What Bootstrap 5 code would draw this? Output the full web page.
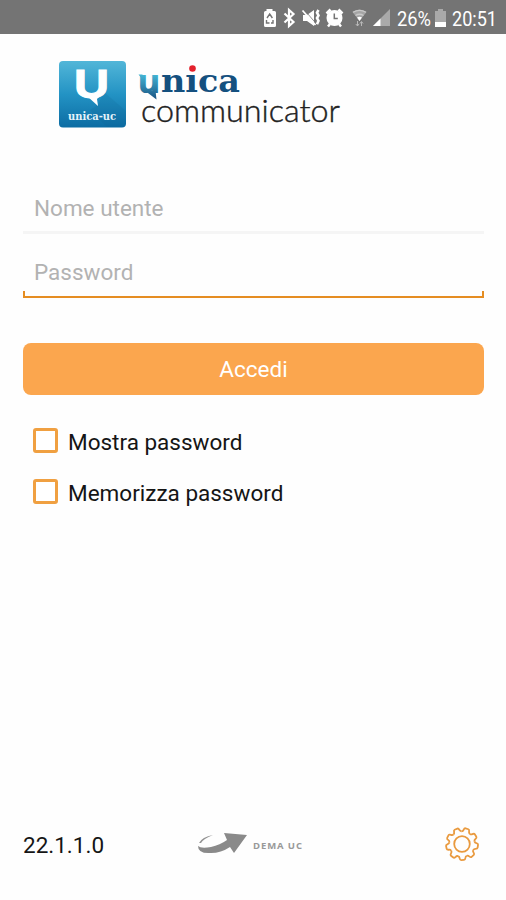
<!DOCTYPE html>
<html lang="it">
<head>
<meta charset="utf-8">
<meta name="viewport" content="width=device-width, initial-scale=1">
<title>Unica Communicator</title>
<link href="https://cdn.jsdelivr.net/npm/bootstrap@5.3.0/dist/css/bootstrap.min.css" rel="stylesheet">
<style>
  body { font-family: Roboto, "Liberation Sans", sans-serif; font-size: 22.5px; line-height: 30px; color: #151515; background: #fefefe; }
  .screen { height: 900px; }
  .statusbar { height: 34px; background: #747474; }
  .brand { padding: 22px 0 0 54px; height: 148px; }
  .login-form { margin: 0 22px 0 23px; }
  .entry { height: 49px; padding: 3px 11px 0; border: 0; border-radius: 0; background: transparent; font-size: 22.5px; line-height: 30px; }
  .entry:focus { box-shadow: none; background: transparent; }
  .entry::placeholder { color: #b2b2b2; opacity: 1; }
  .entry-line { height: 3px; background: #f5f5f5; margin-bottom: 12px; }
  .entry-line-active { height: 7px; border: 2px solid #e58d22; border-top: 0; margin-top: -4px; }
  .btn-login { height: 52px; padding: 8px 0 6px; background: #fba64e; color: #fff; border: 0; border-radius: 8px; font-size: 22.5px; margin-top: 45px; }
  .btn-login:hover { background: #f2993c; color: #fff; }
  .options { padding-top: 20px; }
  .option { height: 51px; padding-left: 10px; gap: 10px; }
  .option span { padding-top: 2px; }
  .form-check-input.tick { width: 25px; height: 25px; margin: 0; border: 3px solid #f0a041; border-radius: 3px; background-color: #fff; }
  .footer-row { height: 60px; padding: 0 26px 0 23px; margin-bottom: 26px; }
  .version { width: 173px; padding-top: 1px; font-size: 22.5px; }
</style>
</head>
<body>
<main class="screen d-flex flex-column overflow-hidden">
  <header class="statusbar flex-shrink-0">
    <svg class="d-block" width="506" height="34" viewBox="0 0 506 34" fill="#fff" font-family="Roboto, sans-serif" font-size="20">
      <!-- battery saver -->
      <path d="M266.500 9h6v2h2q1.500 0 1.500 1.500v13q0 1.500-1.500 1.500h-9q-1.500 0-1.500-1.500v-13q0-1.500 1.500-1.500h1z"/>
      <path d="M267 18l2.700-4 2.700 4M266.500 20v3h3M273 20v3h-2" fill="none" stroke="#747474" stroke-width="1.400"/>
      <!-- bluetooth -->
      <path d="M284.500 13.500l9 8.500-4.500 4V10l4.500 4-9 8.500" fill="none" stroke="#fff" stroke-width="2.200"/>
      <!-- muted, vibrating -->
      <path d="M303 15h4l7-5v16l-7-5h-4z"/>
      <path d="M304.500 10l11.500 13.500" stroke="#747474" stroke-width=".8"/>
      <path d="M302.500 10.500l13 14.500" stroke="#fff" stroke-width="1.800"/>
      <path d="M318.500 10l-1.500 2.700 1.500 2.700-1.500 2.700 1.500 2.700-1.500 3.500" fill="none" stroke="#fff" stroke-width="2.600"/>
      <!-- alarm -->
      <circle cx="334.500" cy="18" r="8"/>
      <path d="M326.500 13.500l4-4M342.500 13.500l-4-4M330 24l-2 2.500M339 24l2 2.500" stroke="#fff" stroke-width="2.500"/>
      <path d="M334.300 13.500v5h3.500" fill="none" stroke="#747474" stroke-width="1.500"/>
      <!-- wifi -->
      <path d="M352.500 12q7-5 14 0l-7 9z" fill="#a5a5a5"/>
      <path d="M353 12.300q6.500-4 13 0M355.500 15.500q4-2.500 8 0" fill="none" stroke="#c9c9c9" stroke-width="1.300"/>
      <path d="M357 17.500q2.500-1.500 5 0l-2.500 3.500z" fill="#fff"/>
      <path d="M357.500 21v5M355.800 24l1.700 2 1.500-2M361.500 26v-4M360 23.500l1.500-2 1.500 2" fill="none" stroke="#b8b8b8"/>
      <!-- signal -->
      <path d="M390 9v17h-17z" fill="#a9a9a9"/>
      <path d="M380.500 18.500v7.500h-7.500z"/>
      <text x="397" y="25.500" textLength="34" lengthAdjust="spacingAndGlyphs">26%</text>
      <path d="M438 9h5v2h3v11h-11v-11h3z" fill="#a9a9a9"/>
      <path d="M435 22h11v5h-11z"/>
      <text x="452" y="25.500" textLength="45" lengthAdjust="spacingAndGlyphs">20:51</text>
    </svg>
  </header>

  <section class="brand flex-shrink-0">
    <svg class="d-block" width="300" height="80" viewBox="54 56 300 80">
      <defs>
        <linearGradient id="tile" x1="0" y1="0" x2="0" y2="1"><stop offset="0" stop-color="#52b6d8"/><stop offset=".5" stop-color="#2393c4"/><stop offset="1" stop-color="#0c6ca3"/></linearGradient>
        <linearGradient id="drop" gradientUnits="userSpaceOnUse" x1="0" y1="74" x2="0" y2="99"><stop offset="0" stop-color="#45b7d6"/><stop offset="1" stop-color="#1a5584"/></linearGradient>
      </defs>
      <rect x="59" y="61" width="67" height="66.500" rx="4" fill="url(#tile)"/>
      <path d="M104 92l22 19v12l-3 4H107L90 110l8-5z" fill="#0c5f90" opacity=".15"/>
      <text x="74" y="97.500" font-family="Liberation Sans, sans-serif" font-weight="700" font-size="40" textLength="35" lengthAdjust="spacingAndGlyphs" fill="#fff" stroke="#fff" stroke-width="1">U</text>
      <path d="M87 96l11 10-1-7 4-4z" fill="#fff"/>
      <text x="68" y="119.500" font-family="DejaVu Serif, serif" font-weight="700" font-size="10.500" textLength="48" lengthAdjust="spacingAndGlyphs" fill="#e4f3fa">unica-uc</text>
      <text x="137.500" y="92.500" font-family="DejaVu Sans, sans-serif" font-weight="700" font-size="32" textLength="23" lengthAdjust="spacingAndGlyphs" fill="url(#drop)">u</text>
      <path d="M138.500 74.500h4v5zM146 91.500l10.500 8-1-9z" fill="url(#drop)"/>
      <text x="161" y="92" font-family="DejaVu Serif, serif" font-weight="700" font-size="32.500" textLength="79" lengthAdjust="spacingAndGlyphs" fill="#14507f">nıca</text>
      <circle cx="192.500" cy="68.500" r="3.300" fill="#e3212c"/>
      <text x="141" y="122" font-family="Lato, sans-serif" font-weight="300" font-size="31" textLength="199" lengthAdjust="spacingAndGlyphs" fill="#222" stroke="#222" stroke-width=".4">communicator</text>
    </svg>
  </section>

  <form class="login-form flex-grow-1">
    <input class="form-control entry" type="text" placeholder="Nome utente" aria-label="Nome utente">
    <div class="entry-line"></div>
    <input class="form-control entry" type="password" placeholder="Password" aria-label="Password">
    <div class="entry-line-active"></div>
    <button class="btn btn-login w-100" type="button">Accedi</button>
    <div class="options">
      <label class="option d-flex align-items-center"><input class="form-check-input tick" type="checkbox"><span>Mostra password</span></label>
      <label class="option d-flex align-items-center"><input class="form-check-input tick" type="checkbox"><span>Memorizza password</span></label>
    </div>
  </form>

  <footer class="footer-row d-flex align-items-center flex-shrink-0">
    <span class="version">22.1.1.0</span>
    <svg width="108" height="30" viewBox="196 830 108 30">
      <path d="M198 847q3 3 13 1 9-2 16-7l-3-7 23 2-13 18-4-6q-9 6-19 6-13 1-13-7z" fill="#8a8a8a"/>
      <path d="M199 844q3-6 14-8-10 4-12 8z" fill="#929292"/>
      <text x="253" y="849.500" font-family="Open Sans, sans-serif" font-size="9.500" font-weight="700" textLength="49" fill="#999">DEMA UC</text>
    </svg>
    <svg class="ms-auto" width="36" height="36" viewBox="-18 -18 36 36" fill="none" stroke="#e99a3f" stroke-width="1.800">
      <defs><path id="tooth" d="M-4.340-11.930Q-3-12.600-2.900-14-2.600-16-1.500-16H1.500Q2.600-16 2.900-14 3-12.600 4.340-11.930"/></defs>
      <g transform="rotate(18)">
        <use href="#tooth"/><use href="#tooth" transform="rotate(40)"/><use href="#tooth" transform="rotate(80)"/>
        <use href="#tooth" transform="rotate(120)"/><use href="#tooth" transform="rotate(160)"/><use href="#tooth" transform="rotate(200)"/>
        <use href="#tooth" transform="rotate(240)"/><use href="#tooth" transform="rotate(280)"/><use href="#tooth" transform="rotate(320)"/>
      </g>
      <circle r="7.800"/>
    </svg>
  </footer>
</main>
<script src="https://cdn.jsdelivr.net/npm/bootstrap@5.3.0/dist/js/bootstrap.bundle.min.js"></script>
</body>
</html>
